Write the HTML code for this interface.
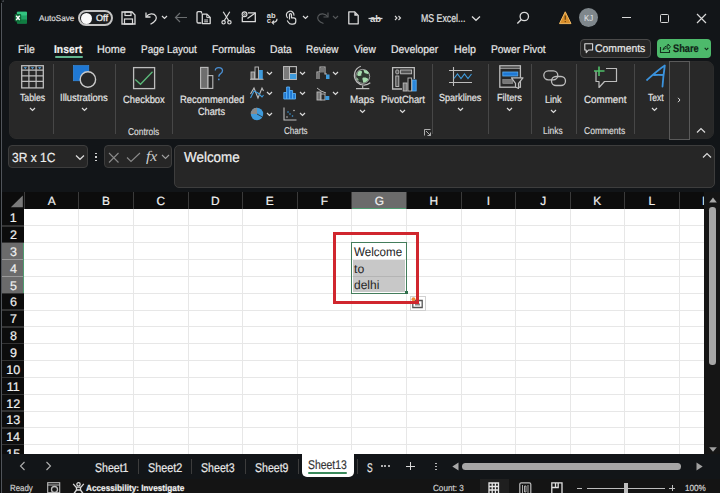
<!DOCTYPE html>
<html><head><meta charset="utf-8"><style>
html,body{margin:0;padding:0;width:720px;height:493px;overflow:hidden;background:#121518;font-family:"Liberation Sans",sans-serif;}
.t{position:absolute;white-space:nowrap;line-height:1;transform-origin:0 0;text-rendering:geometricPrecision;-webkit-text-stroke:0.2px currentColor;}
.r{position:absolute;}
.s{position:absolute;overflow:visible;}
</style></head><body>
<div class="r" style="left:0px;top:0px;width:1px;height:493px;background:#0a0c0d"></div>
<div class="r" style="left:1px;top:2.5px;width:1.2000000000000002px;height:490.5px;background:#50545a"></div>
<div class="r" style="left:2px;top:0px;width:2px;height:1.6px;background:#50545a;border-top-left-radius:2px;opacity:0.7"></div>
<svg class="s" style="left:14px;top:11px" width="14" height="13" viewBox="0 0 14 13"><rect x="2.9" y="0.7" width="10.1" height="11.9" rx="0.8" fill="#21a366"/><rect x="2.9" y="0.7" width="10.1" height="3.8" rx="0.8" fill="#33c481"/><rect x="2.9" y="8.6" width="10.1" height="4" rx="0.8" fill="#107c41"/><rect x="0.7" y="3.1" width="6.5" height="7.5" rx="0.8" fill="#0e6b38"/><path d="M2.2 4.7 L5.7 9 M5.7 4.7 L2.2 9" stroke="#fff" stroke-width="1.4"/></svg>
<div class="t" style="left:38.98px;top:14.00px;font-size:8.4px;color:#dcdcdc;font-weight:normal;transform:scaleX(0.9713);">AutoSave</div>
<div class="r" style="left:78.2px;top:10.3px;width:31px;height:11.3px;border:2px solid #c4c4c4;border-radius:9px;background:#1c1e20"></div>
<div class="r" style="left:81.3px;top:12.5px;width:11.2px;height:11.2px;border-radius:50%;background:#fafafa"></div>
<div class="t" style="left:95.57px;top:14.00px;font-size:9.1px;color:#ececec;font-weight:normal;transform:scaleX(0.9951);-webkit-text-stroke:0.35px currentColor">Off</div>
<svg class="s" style="left:121px;top:11px" width="15" height="14" viewBox="0 0 15 14"><path d="M1 1 H11 L14 4 V13 H1 Z" fill="none" stroke="#dadada" stroke-width="1.3"/><rect x="4" y="1" width="6" height="3.5" fill="none" stroke="#dadada" stroke-width="1.2"/><rect x="3.5" y="8" width="8" height="5" fill="none" stroke="#dadada" stroke-width="1.2"/></svg>
<svg class="s" style="left:144px;top:11px" width="14" height="14" viewBox="0 0 14 14"><path d="M2 1.5 V6 H6.5" fill="none" stroke="#dadada" stroke-width="1.3"/><path d="M2.3 5.8 C4.5 2.2 10 2 11.8 5 C13.4 7.8 11.5 10.5 6.5 13.3" fill="none" stroke="#dadada" stroke-width="1.3"/></svg>
<svg class="s" style="left:161px;top:15px" width="7" height="5" viewBox="0 0 7 5"><path d="M1 1 L3.5 3.5 L6 1" fill="none" stroke="#dadada" stroke-width="1.2"/></svg>
<svg class="s" style="left:174px;top:12px" width="14" height="11" viewBox="0 0 14 11"><path d="M1.5 5.5 H13 M6 1 L1.5 5.5 L6 10" fill="none" stroke="#6b6e70" stroke-width="1.2"/></svg>
<svg class="s" style="left:196px;top:11px" width="16" height="14" viewBox="0 0 16 14"><path d="M5.5 2.5 V1.3 Q5.5 0.7 4.8 0.7 H2.3 Q1 0.7 1 2 V10.8 Q1 12 2.3 12 H5.3" fill="none" stroke="#dadada" stroke-width="1.3"/><path d="M6.3 3.2 H11 L14.2 6.4 V12.6 H6.3 Z" fill="none" stroke="#dadada" stroke-width="1.3" stroke-linejoin="round"/><path d="M10.8 3.2 V6.6 H14.2" fill="none" stroke="#dadada" stroke-width="1"/><path d="M8.2 9 H12 M8.2 10.8 H12" stroke="#dadada" stroke-width="1"/></svg>
<svg class="s" style="left:221px;top:11px" width="11" height="14" viewBox="0 0 11 14"><path d="M2.2 0.8 L7.8 9.8 M8.8 0.8 L3.2 9.8" stroke="#dadada" stroke-width="1.2"/><circle cx="2.6" cy="11.3" r="1.7" fill="none" stroke="#dadada" stroke-width="1.2"/><circle cx="8.4" cy="11.3" r="1.7" fill="none" stroke="#dadada" stroke-width="1.2"/></svg>
<svg class="s" style="left:241px;top:11px" width="16" height="12" viewBox="0 0 16 12"><path d="M1.3 5.5 V10.6 H14.3 V1.8 H7" fill="none" stroke="#dadada" stroke-width="1.3"/><path d="M6.5 7.5 L14.3 2" stroke="#dadada" stroke-width="1.2"/><circle cx="3.5" cy="3.3" r="2.4" fill="none" stroke="#dadada" stroke-width="1.2"/><circle cx="3.5" cy="3.3" r="0.9" fill="none" stroke="#dadada" stroke-width="0.8"/></svg>
<svg class="s" style="left:266px;top:11px" width="13" height="14" viewBox="0 0 13 14"><text x="0.8" y="6.6" font-family="Liberation Sans" font-weight="bold" font-size="7.6" fill="#dadada">ab</text><text x="0.8" y="12.3" font-family="Liberation Sans" font-weight="bold" font-size="7.6" fill="#dadada">c</text><path d="M11 7.8 C11 10.8 9.5 11.5 6.3 11.5 M8 9.6 L6.1 11.5 L8 13.4" fill="none" stroke="#dadada" stroke-width="1.2"/></svg>
<svg class="s" style="left:285px;top:10px" width="12" height="15" viewBox="0 0 12 15"><path d="M2.6 8.2 C0.6 6 1 2 4.3 1.3 C7 0.8 9.3 2.8 8.9 5.6" fill="none" stroke="#dadada" stroke-width="1.2"/><path d="M4.5 9.5 V4.6 Q4.5 3.6 5.5 3.6 Q6.5 3.6 6.5 4.6 V7.8 H8.8 Q10.8 7.8 10.8 10 V11.3 Q10.8 14.2 7.8 14.2 H6.6 Q4.6 14.2 3.5 12.5 L2.2 10.5" fill="none" stroke="#dadada" stroke-width="1.2" stroke-linejoin="round"/></svg>
<svg class="s" style="left:302px;top:15px" width="7" height="5" viewBox="0 0 7 5"><path d="M1 1 L3.5 3.5 L6 1" fill="none" stroke="#dadada" stroke-width="1.2"/></svg>
<svg class="s" style="left:317px;top:11px" width="13" height="13" viewBox="0 0 13 13"><path d="M11 1.5 V6 H6.5" fill="none" stroke="#55585a" stroke-width="1.2"/><path d="M10.7 5.8 C8.5 2.2 3 2 1.2 5 C-0.4 7.8 1.5 10.5 6.5 12.5" fill="none" stroke="#55585a" stroke-width="1.2"/></svg>
<svg class="s" style="left:332px;top:15px" width="7" height="5" viewBox="0 0 7 5"><path d="M1 1 L3.5 3.5 L6 1" fill="none" stroke="#55585a" stroke-width="1.1"/></svg>
<svg class="s" style="left:347.5px;top:11px" width="11" height="14" viewBox="0 0 11 14"><path d="M0.8 0.8 H6.5 L10.2 4.5 V12.8 H0.8 Z" fill="none" stroke="#dadada" stroke-width="1.3" stroke-linejoin="round"/><path d="M6.3 1.2 V4.7 H9.8 Z" fill="#dadada"/></svg>
<svg class="s" style="left:368px;top:12px" width="15" height="11" viewBox="0 0 15 11"><text x="2" y="9.6" font-family="Liberation Sans" font-weight="bold" font-size="9.5" fill="#dadada">ab</text><path d="M0.5 6.5 H14.5" stroke="#dadada" stroke-width="1.3"/></svg>
<svg class="s" style="left:394px;top:15px" width="8" height="6" viewBox="0 0 8 6"><path d="M1 1 L3 3 L1 5 M4.5 1 L6.5 3 L4.5 5" fill="none" stroke="#dadada" stroke-width="1.1"/></svg>
<div class="t" style="left:420.88px;top:14.00px;font-size:11.3px;color:#e4e4e4;font-weight:normal;transform:scaleX(0.7758);">MS Excel...</div>
<svg class="s" style="left:471px;top:15px" width="10" height="7" viewBox="0 0 10 7"><path d="M1 1.5 L5 5.3 L9 1.5" fill="none" stroke="#dadada" stroke-width="1.3"/></svg>
<svg class="s" style="left:516px;top:11px" width="14" height="14" viewBox="0 0 14 14"><circle cx="8.3" cy="5.5" r="4.2" fill="none" stroke="#dadada" stroke-width="1.3"/><path d="M5.3 8.5 L1.3 12.5" stroke="#dadada" stroke-width="1.4"/></svg>
<svg class="s" style="left:558.5px;top:11px" width="12.5" height="13.5" viewBox="0 0 12.5 13.5"><path d="M6.25 0.8 L12 12.6 H0.5 Z" fill="#d98e2a" stroke="#f0b860" stroke-width="1" stroke-linejoin="round"/><path d="M6.25 4.5 V8.8" stroke="#5a3a10" stroke-width="1.2"/><circle cx="6.25" cy="10.6" r="0.7" fill="#5a3a10"/></svg>
<div class="r" style="left:578.8px;top:8.2px;width:19.1px;height:19.1px;border-radius:50%;background:#7f878c"></div>
<div class="t" style="left:583.96px;top:14.00px;font-size:8.6px;color:#e0e4e6;font-weight:normal;transform:scaleX(0.9077);-webkit-text-stroke:0">KJ</div>
<div class="r" style="left:621.5px;top:17px;width:9.5px;height:1px;background:#d8d8d8"></div>
<div class="r" style="left:659.5px;top:13.5px;width:7.2px;height:7.2px;border:1.1px solid #d8d8d8;border-radius:1.5px"></div>
<svg class="s" style="left:696px;top:13px" width="11" height="11" viewBox="0 0 11 11"><path d="M1 1 L10 10 M10 1 L1 10" stroke="#d8d8d8" stroke-width="1.2"/></svg>
<div class="t" style="left:18.14px;top:45.00px;font-size:11.3px;color:#e8e8e8;font-weight:normal;transform:scaleX(0.9231);">File</div>
<div class="t" style="left:54.02px;top:45.00px;font-size:11.3px;color:#f2f2f2;font-weight:bold;transform:scaleX(0.9137);">Insert</div>
<div class="r" style="left:55px;top:56px;width:27.5px;height:2.299999999999997px;background:#62b58f;border-radius:1px"></div>
<div class="t" style="left:96.61px;top:45.00px;font-size:11.3px;color:#e8e8e8;font-weight:normal;transform:scaleX(0.9574);">Home</div>
<div class="t" style="left:140.88px;top:45.00px;font-size:11.3px;color:#e8e8e8;font-weight:normal;transform:scaleX(0.8808);">Page Layout</div>
<div class="t" style="left:212.45px;top:45.00px;font-size:11.3px;color:#e8e8e8;font-weight:normal;transform:scaleX(0.9177);">Formulas</div>
<div class="t" style="left:269.96px;top:45.00px;font-size:11.3px;color:#e8e8e8;font-weight:normal;transform:scaleX(0.9111);">Data</div>
<div class="t" style="left:305.89px;top:45.00px;font-size:11.3px;color:#e8e8e8;font-weight:normal;transform:scaleX(0.8744);">Review</div>
<div class="t" style="left:353.96px;top:45.00px;font-size:11.3px;color:#e8e8e8;font-weight:normal;transform:scaleX(0.8981);">View</div>
<div class="t" style="left:390.85px;top:45.00px;font-size:11.3px;color:#e8e8e8;font-weight:normal;transform:scaleX(0.9187);">Developer</div>
<div class="t" style="left:453.83px;top:45.00px;font-size:11.3px;color:#e8e8e8;font-weight:normal;transform:scaleX(0.9436);">Help</div>
<div class="t" style="left:490.86px;top:45.00px;font-size:11.3px;color:#e8e8e8;font-weight:normal;transform:scaleX(0.9076);">Power Pivot</div>
<div class="r" style="left:580px;top:38.6px;width:68.5px;height:17px;border:1px solid #4a4a4a;border-radius:4px;background:#262626"></div>
<svg class="s" style="left:583.5px;top:43px" width="10" height="11" viewBox="0 0 10 11"><path d="M0.8 0.8 H8.6 V7 H4.5 L2.2 9.6 V7 H0.8 Z" fill="none" stroke="#dadada" stroke-width="1.1" stroke-linejoin="round"/></svg>
<div class="t" style="left:595.48px;top:44.00px;font-size:11.0px;color:#e8e8e8;font-weight:normal;transform:scaleX(0.9459);">Comments</div>
<div class="r" style="left:656.5px;top:39px;width:54.7px;height:18.8px;border-radius:4px;background:#4dba6b"></div>
<svg class="s" style="left:659px;top:42px" width="12" height="12" viewBox="0 0 12 12"><path d="M1.5 5 V10.5 H10.5 V8" fill="none" stroke="#13301d" stroke-width="1.1"/><path d="M4 8 C4.5 5 6.5 4 9 4 V2 L11.5 4.8 L9 7.5 V5.8 C7 5.8 5.5 6.5 4 8 Z" fill="none" stroke="#13301d" stroke-width="1"/></svg>
<div class="t" style="left:672.52px;top:44.00px;font-size:10.9px;color:#0f2416;font-weight:bold;transform:scaleX(0.8512);">Share</div>
<svg class="s" style="left:703.5px;top:47px" width="5" height="4" viewBox="0 0 5 4"><path d="M0.7 0.8 L2.5 2.8 L4.3 0.8" fill="none" stroke="#0f2416" stroke-width="1.1"/></svg>
<div class="r" style="left:8.5px;top:60.5px;width:703px;height:76px;border:1px solid #2b2b2b;border-radius:7px;background:#282828"></div>
<div class="r" style="left:53.3px;top:64px;width:1.0px;height:70px;background:#474747"></div>
<div class="r" style="left:115.0px;top:64px;width:1.0px;height:70px;background:#474747"></div>
<div class="r" style="left:171.7px;top:64px;width:1.0px;height:70px;background:#474747"></div>
<div class="r" style="left:432.0px;top:64px;width:1.0px;height:70px;background:#474747"></div>
<div class="r" style="left:487.8px;top:64px;width:1.0px;height:70px;background:#474747"></div>
<div class="r" style="left:531.3px;top:64px;width:1.0px;height:70px;background:#474747"></div>
<div class="r" style="left:576.3px;top:64px;width:1.0px;height:70px;background:#474747"></div>
<div class="r" style="left:633.8px;top:64px;width:1.0px;height:70px;background:#474747"></div>
<div class="r" style="left:669px;top:60.6px;width:18.8px;height:77.5px;border:1px solid #5a5a5a;background:#2a2a2a"></div>
<svg class="s" style="left:677px;top:96.5px" width="4" height="6" viewBox="0 0 4 6"><path d="M1 0.8 L3 3 L1 5.2" fill="none" stroke="#dadada" stroke-width="1"/></svg>
<svg class="s" style="left:696px;top:127px" width="10" height="7" viewBox="0 0 10 7"><path d="M1 5.5 L5 1.5 L9 5.5" fill="none" stroke="#dadada" stroke-width="1.2"/></svg>
<svg class="s" style="left:21px;top:65px" width="23" height="24" viewBox="0 0 23 24"><rect x="0.7" y="0.7" width="21.6" height="22.2" fill="none" stroke="#bdbdbd" stroke-width="1.3"/><path d="M0.7 5.2 H22.3 M0.7 10.8 H22.3 M0.7 16.4 H22.3 M7.9 0.7 V22.9 M15.1 0.7 V22.9" stroke="#bdbdbd" stroke-width="1.2"/><path d="M2.6 2.3 L4.3 4.1 L6 2.3 Z M9.8 2.3 L11.5 4.1 L13.2 2.3 Z M17 2.3 L18.7 4.1 L20.4 2.3 Z" fill="#5aaef0"/></svg>
<div class="t" style="left:20.11px;top:94.00px;font-size:10.25px;color:#e4e4e4;font-weight:normal;transform:scaleX(0.8509);">Tables</div>
<svg class="s" style="left:28.700000000000003px;top:106.5px" width="7" height="5" viewBox="0 0 7 5"><path d="M1 1 L3.5 3.5 L6 1" fill="none" stroke="#dadada" stroke-width="1.2"/></svg>
<svg class="s" style="left:73px;top:65px" width="25" height="24" viewBox="0 0 25 24"><rect x="0.3" y="0.5" width="15.5" height="15.3" fill="#1f78d4" stroke="#3a8ee0" stroke-width="0.6"/><circle cx="14.9" cy="14.5" r="7.7" fill="#282828" stroke="#cacaca" stroke-width="1.4"/></svg>
<div class="t" style="left:60.13px;top:94.00px;font-size:10.25px;color:#e4e4e4;font-weight:normal;transform:scaleX(0.9222);">Illustrations</div>
<svg class="s" style="left:80.7px;top:106.5px" width="7" height="5" viewBox="0 0 7 5"><path d="M1 1 L3.5 3.5 L6 1" fill="none" stroke="#dadada" stroke-width="1.2"/></svg>
<svg class="s" style="left:133px;top:67px" width="23" height="23" viewBox="0 0 23 23"><rect x="0.6" y="0.6" width="21" height="21" fill="none" stroke="#bdbdbd" stroke-width="1.3"/><path d="M2.3 12.6 L7.5 17.3 L19.5 4.8" fill="none" stroke="#5cb97a" stroke-width="1.3"/></svg>
<div class="t" style="left:122.73px;top:95.00px;font-size:10.5px;color:#e4e4e4;font-weight:normal;transform:scaleX(0.8950);">Checkbox</div>
<div class="t" style="left:127.58px;top:128.00px;font-size:9.9px;color:#d8d8d8;font-weight:normal;transform:scaleX(0.8496);">Controls</div>
<svg class="s" style="left:199px;top:66px" width="26" height="24" viewBox="0 0 26 24"><rect x="1.6" y="1.4" width="7.4" height="21" fill="#6e6e6e" stroke="#bdbdbd" stroke-width="1.1"/><rect x="9" y="9.6" width="4.8" height="12.8" fill="#282828" stroke="#bdbdbd" stroke-width="1.1"/><path d="M16.3 4.6 C16.3 2.6 17.8 1.6 19.8 1.6 C21.9 1.6 23.5 2.9 23.5 4.8 C23.5 6.6 22.3 7.3 21.1 8.1 C20.1 8.8 19.8 9.4 19.8 10.8" fill="none" stroke="#4a8fd3" stroke-width="1.3"/><circle cx="19.8" cy="13.4" r="0.85" fill="#4a8fd3"/></svg>
<div class="t" style="left:179.62px;top:95.00px;font-size:10.5px;color:#e4e4e4;font-weight:normal;transform:scaleX(0.9013);">Recommended</div>
<div class="t" style="left:198.04px;top:107.00px;font-size:10.5px;color:#e4e4e4;font-weight:normal;transform:scaleX(0.8725);">Charts</div>
<svg class="s" style="left:249.5px;top:66px" width="14" height="14" viewBox="0 0 14 14"><rect x="1" y="6" width="3.5" height="7" fill="#777" stroke="#bdbdbd" stroke-width="0.9"/><rect x="5" y="1" width="3.5" height="12" fill="#2a2a2a" stroke="#bdbdbd" stroke-width="0.9"/><rect x="9" y="4" width="3.8" height="9" fill="#3f9bdc"/><path d="M0 13.3 H13.5" stroke="#bdbdbd" stroke-width="1"/></svg>
<svg class="s" style="left:265.5px;top:70.5px" width="7" height="5" viewBox="0 0 7 5"><path d="M1 1 L3.5 3.5 L6 1" fill="none" stroke="#dadada" stroke-width="1.2"/></svg>
<svg class="s" style="left:283px;top:66px" width="14" height="14" viewBox="0 0 14 14"><rect x="0.6" y="0.6" width="12.8" height="12.8" fill="none" stroke="#bdbdbd" stroke-width="1.1"/><rect x="1" y="1" width="5" height="12" fill="#7a7a7a"/><rect x="7" y="8" width="6.3" height="5" fill="#3f9bdc"/><path d="M6.5 0.6 V13.4 M6.5 7.5 H13.4" stroke="#bdbdbd" stroke-width="1"/></svg>
<svg class="s" style="left:299.2px;top:70.5px" width="7" height="5" viewBox="0 0 7 5"><path d="M1 1 L3.5 3.5 L6 1" fill="none" stroke="#dadada" stroke-width="1.2"/></svg>
<svg class="s" style="left:316px;top:66px" width="14" height="14" viewBox="0 0 14 14"><path d="M1 13 V6 H4 V1 H9 V8 H11" fill="none" stroke="#bdbdbd" stroke-width="1.1"/><rect x="1.5" y="6.5" width="2.5" height="6.5" fill="#777"/><rect x="4.5" y="1.5" width="4" height="5" fill="#777"/><rect x="10" y="8.5" width="3.5" height="4.5" fill="#3f9bdc"/></svg>
<svg class="s" style="left:331.5px;top:70.5px" width="7" height="5" viewBox="0 0 7 5"><path d="M1 1 L3.5 3.5 L6 1" fill="none" stroke="#dadada" stroke-width="1.2"/></svg>
<svg class="s" style="left:249.5px;top:86px" width="14" height="14" viewBox="0 0 14 14"><path d="M0.5 8 L4 2 L8 12 L12 2 L13.5 5" fill="none" stroke="#bdbdbd" stroke-width="1.1"/><path d="M0.5 12 L4 5 L8 7 L12 11 L13.5 9" fill="none" stroke="#3f9bdc" stroke-width="1.1"/></svg>
<svg class="s" style="left:265.5px;top:90.5px" width="7" height="5" viewBox="0 0 7 5"><path d="M1 1 L3.5 3.5 L6 1" fill="none" stroke="#dadada" stroke-width="1.2"/></svg>
<svg class="s" style="left:283px;top:86px" width="14" height="14" viewBox="0 0 14 14"><path d="M0.8 13 V6.5 H3.6 V13 M3.6 13 V1 H6.6 V13 M6.6 13 V4.5 H9.6 V13 M9.6 13 V7.5 H12.5 V13 H0.8" fill="#1f78d4" stroke="#5aaef0" stroke-width="0.9"/></svg>
<svg class="s" style="left:299.2px;top:90.5px" width="7" height="5" viewBox="0 0 7 5"><path d="M1 1 L3.5 3.5 L6 1" fill="none" stroke="#dadada" stroke-width="1.2"/></svg>
<svg class="s" style="left:316px;top:86px" width="14" height="15" viewBox="0 0 14 15"><path d="M1 2 L5 5 L10 7" fill="none" stroke="#bdbdbd" stroke-width="1"/><rect x="1" y="6" width="4" height="8" fill="#777" stroke="#bdbdbd" stroke-width="0.9"/><rect x="5" y="8" width="4" height="6" fill="#2a2a2a" stroke="#bdbdbd" stroke-width="0.9"/><rect x="9.3" y="10" width="4" height="4" fill="#3f9bdc"/></svg>
<svg class="s" style="left:331.5px;top:90.5px" width="7" height="5" viewBox="0 0 7 5"><path d="M1 1 L3.5 3.5 L6 1" fill="none" stroke="#dadada" stroke-width="1.2"/></svg>
<svg class="s" style="left:249.5px;top:107px" width="14" height="14" viewBox="0 0 14 14"><circle cx="7" cy="7" r="6.2" fill="#3f9bdc"/><path d="M7 7 V0.8 A6.2 6.2 0 0 0 0.8 7 Z" fill="#8a8a8a"/><path d="M7 7 L12.5 10" stroke="#2a2a2a" stroke-width="0.8"/></svg>
<svg class="s" style="left:265.5px;top:111.5px" width="7" height="5" viewBox="0 0 7 5"><path d="M1 1 L3.5 3.5 L6 1" fill="none" stroke="#dadada" stroke-width="1.2"/></svg>
<svg class="s" style="left:283px;top:107px" width="14" height="14" viewBox="0 0 14 14"><path d="M1 0.5 V13 H13.5" fill="none" stroke="#bdbdbd" stroke-width="1.1"/><circle cx="4" cy="10" r="0.8" fill="#bdbdbd"/><circle cx="7" cy="7" r="0.8" fill="#3f9bdc"/><circle cx="9.5" cy="9" r="0.8" fill="#3f9bdc"/><circle cx="11" cy="3.5" r="0.8" fill="#bdbdbd"/><circle cx="5" cy="5" r="0.8" fill="#3f9bdc"/></svg>
<svg class="s" style="left:299.2px;top:111.5px" width="7" height="5" viewBox="0 0 7 5"><path d="M1 1 L3.5 3.5 L6 1" fill="none" stroke="#dadada" stroke-width="1.2"/></svg>
<div class="t" style="left:283.60px;top:127.00px;font-size:9.9px;color:#d8d8d8;font-weight:normal;transform:scaleX(0.8123);">Charts</div>
<svg class="s" style="left:423.5px;top:128.5px" width="7" height="7" viewBox="0 0 7 7"><path d="M0.5 6.5 V0.5 H6.5 M2 2 L6.5 6.5 M3.5 6.5 H6.5 V3.5" fill="none" stroke="#bdbdbd" stroke-width="0.9"/></svg>
<svg class="s" style="left:352px;top:65px" width="21" height="25" viewBox="0 0 21 25"><circle cx="10.7" cy="11.4" r="7" fill="#2f3a31" stroke="#bdbdbd" stroke-width="0.8"/><path d="M5.5 8 C6.5 5.5 9 5 10 6.5 C10.5 8 8.5 9 9.5 10.5 C8 11 6 11.5 5.2 10 Z M11.5 5.2 C13.5 4.8 16 6 17 8.5 C15.5 9.5 14 8.5 12.5 8 Z M10.5 13 C12.5 12 15 13 16.5 14 C15.5 16.5 13 18 11 17.5 C11.5 16 10 14.5 10.5 13 Z M4.3 12.5 C5.5 13 6.5 14 6.8 15.5 C5.5 15 4.5 14 4.3 12.5 Z" fill="#a6dcae"/><path d="M8.8 1.3 C2 3.8 0.5 12 5 17 C8.5 20.8 14.5 21 18.3 17.8" fill="none" stroke="#bdbdbd" stroke-width="1.2"/><path d="M10.7 20.5 V23.3 M4 23.6 H17.3" stroke="#bdbdbd" stroke-width="1.2"/></svg>
<div class="t" style="left:350.19px;top:95.00px;font-size:10.5px;color:#e4e4e4;font-weight:normal;transform:scaleX(0.9409);">Maps</div>
<svg class="s" style="left:359.0px;top:108.5px" width="7" height="5" viewBox="0 0 7 5"><path d="M1 1 L3.5 3.5 L6 1" fill="none" stroke="#dadada" stroke-width="1.2"/></svg>
<svg class="s" style="left:391px;top:66px" width="27" height="26" viewBox="0 0 27 26"><path d="M11 23 H1.6 V1.6 H23.3 V13" fill="none" stroke="#bdbdbd" stroke-width="1.3"/><rect x="4.8" y="4" width="3" height="3.8" rx="0.8" fill="#555" stroke="#bdbdbd" stroke-width="0.9"/><rect x="9.6" y="4" width="11" height="3.8" fill="#555" stroke="#bdbdbd" stroke-width="0.9"/><rect x="4.8" y="10" width="3" height="10.5" fill="#555" stroke="#bdbdbd" stroke-width="0.9"/><rect x="12.2" y="17" width="3.8" height="8" fill="#777" stroke="#bdbdbd" stroke-width="0.9"/><rect x="17" y="12" width="3.6" height="13" fill="#151515" stroke="#bdbdbd" stroke-width="0.9"/><rect x="21.4" y="14" width="3.8" height="11" fill="#2a86dc" stroke="#5aaef0" stroke-width="0.8"/></svg>
<div class="t" style="left:381.23px;top:95.00px;font-size:10.5px;color:#e4e4e4;font-weight:normal;transform:scaleX(0.8945);">PivotChart</div>
<svg class="s" style="left:399.2px;top:109.0px" width="7" height="5" viewBox="0 0 7 5"><path d="M1 1 L3.5 3.5 L6 1" fill="none" stroke="#dadada" stroke-width="1.2"/></svg>
<svg class="s" style="left:449px;top:67px" width="24" height="20" viewBox="0 0 24 20"><path d="M4.5 0 V19 M0 3.5 H23 M0 15.5 H23" stroke="#bdbdbd" stroke-width="1.1"/><path d="M5 11.5 L8.5 7 L12 11.5 L15.5 7 L19 11.5 L22.5 7" fill="none" stroke="#3f9bdc" stroke-width="1.1"/></svg>
<div class="t" style="left:439.28px;top:94.00px;font-size:10.25px;color:#e4e4e4;font-weight:normal;transform:scaleX(0.8829);">Sparklines</div>
<svg class="s" style="left:457.0px;top:106.5px" width="7" height="5" viewBox="0 0 7 5"><path d="M1 1 L3.5 3.5 L6 1" fill="none" stroke="#dadada" stroke-width="1.2"/></svg>
<svg class="s" style="left:498.5px;top:65px" width="25" height="25" viewBox="0 0 25 25"><rect x="0.8" y="0.8" width="20.6" height="21.4" fill="none" stroke="#bdbdbd" stroke-width="1.3"/><path d="M0.8 3.2 H21.4" stroke="#bdbdbd" stroke-width="1"/><rect x="3.8" y="7" width="15" height="4" fill="#1f78d4" stroke="#5aaef0" stroke-width="0.8"/><rect x="3.8" y="14.5" width="10" height="4" fill="#777" stroke="#999" stroke-width="0.6"/><path d="M12.5 12.8 H24 L19.5 18.3 V23.5 L16.5 22 V18.3 Z" fill="#282828" stroke="#bdbdbd" stroke-width="1.2" stroke-linejoin="round"/></svg>
<div class="t" style="left:497.25px;top:94.00px;font-size:10.25px;color:#e4e4e4;font-weight:normal;transform:scaleX(0.8917);">Filters</div>
<svg class="s" style="left:506.0px;top:106.5px" width="7" height="5" viewBox="0 0 7 5"><path d="M1 1 L3.5 3.5 L6 1" fill="none" stroke="#dadada" stroke-width="1.2"/></svg>
<svg class="s" style="left:542.5px;top:70px" width="24" height="17" viewBox="0 0 24 17"><rect x="0.8" y="0.8" width="14" height="9" rx="4.5" fill="none" stroke="#bdbdbd" stroke-width="1.3"/><rect x="8.5" y="6.5" width="14" height="9" rx="4.5" fill="none" stroke="#bdbdbd" stroke-width="1.3"/></svg>
<div class="t" style="left:545.16px;top:95.00px;font-size:10.5px;color:#e4e4e4;font-weight:normal;transform:scaleX(0.8643);">Link</div>
<svg class="s" style="left:549.8px;top:108.5px" width="7" height="5" viewBox="0 0 7 5"><path d="M1 1 L3.5 3.5 L6 1" fill="none" stroke="#dadada" stroke-width="1.2"/></svg>
<div class="t" style="left:543.31px;top:127.00px;font-size:9.9px;color:#d8d8d8;font-weight:normal;transform:scaleX(0.8524);">Links</div>
<svg class="s" style="left:592px;top:66px" width="26" height="23" viewBox="0 0 26 23"><path d="M4 5 V15.5 H7 V21.5 L12.5 15.5 H24.5 V2.5 H14" fill="none" stroke="#bdbdbd" stroke-width="1.2" stroke-linejoin="round"/><path d="M7 0.5 V10 M2 5 H12.5" stroke="#4fbf68" stroke-width="1.6"/></svg>
<div class="t" style="left:583.91px;top:95.00px;font-size:10.5px;color:#e4e4e4;font-weight:normal;transform:scaleX(0.9310);">Comment</div>
<div class="t" style="left:584.27px;top:127.00px;font-size:9.9px;color:#d8d8d8;font-weight:normal;transform:scaleX(0.8637);">Comments</div>
<svg class="s" style="left:645px;top:64px" width="22" height="24" viewBox="0 0 22 24"><path d="M2 16 C6.5 12 13 6 19.8 1.5 C18.8 8.5 18 15.5 17.5 22.5 M9 11 C12 10.8 15 10.8 18.6 11" fill="none" stroke="#3b93dd" stroke-width="1.8" stroke-linecap="round" stroke-linejoin="round"/></svg>
<div class="t" style="left:647.81px;top:94.00px;font-size:10.25px;color:#e4e4e4;font-weight:normal;transform:scaleX(0.8328);">Text</div>
<svg class="s" style="left:651.2px;top:106.5px" width="7" height="5" viewBox="0 0 7 5"><path d="M1 1 L3.5 3.5 L6 1" fill="none" stroke="#dadada" stroke-width="1.2"/></svg>
<div class="r" style="left:8px;top:145.2px;width:78px;height:20.5px;border:1px solid #3d3d3d;border-radius:4px;background:#262626"></div>
<div class="t" style="left:12.04px;top:151.00px;font-size:13.2px;color:#eeeeee;font-weight:normal;transform:scaleX(0.9105);">3R x 1C</div>
<svg class="s" style="left:75px;top:154px" width="10" height="7" viewBox="0 0 10 7"><path d="M1 1.5 L5 5.3 L9 1.5" fill="none" stroke="#dadada" stroke-width="1.2"/></svg>
<div class="r" style="left:95px;top:152.7px;width:1.5999999999999943px;height:1.6000000000000227px;background:#cfcfcf"></div>
<div class="r" style="left:95px;top:156.2px;width:1.5999999999999943px;height:1.6000000000000227px;background:#cfcfcf"></div>
<div class="r" style="left:95px;top:159.7px;width:1.5999999999999943px;height:1.6000000000000227px;background:#cfcfcf"></div>
<div class="r" style="left:104px;top:145.3px;width:65.7px;height:20.3px;border:1px solid #3d3d3d;border-radius:4px;background:#262626"></div>
<svg class="s" style="left:108px;top:152px" width="12" height="11" viewBox="0 0 12 11"><path d="M1 1 L10.5 10.5 M10.5 1 L1 10.5" stroke="#8a8a8a" stroke-width="1.1"/></svg>
<svg class="s" style="left:125.5px;top:152px" width="15" height="11" viewBox="0 0 15 11"><path d="M1 5.5 L5 9.5 L14 1" fill="none" stroke="#8a8a8a" stroke-width="1.1"/></svg>
<div class="t" style="left:145.5px;top:149.5px;font-size:14.5px;color:#cfcfcf;font-family:'Liberation Serif',serif;font-style:italic;transform:scaleX(1.08);-webkit-text-stroke:0">fx</div>
<svg class="s" style="left:161px;top:154px" width="9" height="6" viewBox="0 0 9 6"><path d="M1 1 L4.5 4.5 L8 1" fill="none" stroke="#a0a0a0" stroke-width="1.1"/></svg>
<div class="r" style="left:174px;top:145px;width:539px;height:40.6px;border:1px solid #3d3d3d;border-radius:5px;background:#262626"></div>
<div class="t" style="left:183.85px;top:151.00px;font-size:14.5px;color:#f0f0f0;font-weight:normal;transform:scaleX(0.9264);">Welcome</div>
<svg class="s" style="left:702px;top:152px" width="10" height="7" viewBox="0 0 10 7"><path d="M1 5.5 L5 1.5 L9 5.5" fill="none" stroke="#dadada" stroke-width="1.2"/></svg>
<div class="r" style="left:2px;top:192px;width:702px;height:17.0px;background:#0c0c0c"></div>
<div class="r" style="left:2px;top:209.0px;width:22.3px;height:245.0px;background:#0c0c0c"></div>
<div class="r" style="left:24.3px;top:209.0px;width:679.7px;height:245.0px;background:#ffffff"></div>
<div class="r" style="left:23.5px;top:192px;width:0.8000000000000007px;height:17.0px;background:#3a3a3a"></div>
<svg class="s" style="left:9px;top:194px" width="15" height="14" viewBox="0 0 15 14"><path d="M13.8 1.5 V13.2 H1.8 Z" fill="#7a7a7a"/></svg>
<div class="r" style="left:78.40px;top:209.0px;width:1px;height:245.00px;background:#e7e7e7"></div><div class="r" style="left:78.40px;top:192px;width:1px;height:17.00px;background:#3a3a3a"></div><div class="r" style="left:133.00px;top:209.0px;width:1px;height:245.00px;background:#e7e7e7"></div><div class="r" style="left:133.00px;top:192px;width:1px;height:17.00px;background:#3a3a3a"></div><div class="r" style="left:187.60px;top:209.0px;width:1px;height:245.00px;background:#e7e7e7"></div><div class="r" style="left:187.60px;top:192px;width:1px;height:17.00px;background:#3a3a3a"></div><div class="r" style="left:242.20px;top:209.0px;width:1px;height:245.00px;background:#e7e7e7"></div><div class="r" style="left:242.20px;top:192px;width:1px;height:17.00px;background:#3a3a3a"></div><div class="r" style="left:296.80px;top:209.0px;width:1px;height:245.00px;background:#e7e7e7"></div><div class="r" style="left:296.80px;top:192px;width:1px;height:17.00px;background:#3a3a3a"></div><div class="r" style="left:351.40px;top:209.0px;width:1px;height:245.00px;background:#e7e7e7"></div><div class="r" style="left:351.40px;top:192px;width:1px;height:17.00px;background:#3a3a3a"></div><div class="r" style="left:406.00px;top:209.0px;width:1px;height:245.00px;background:#e7e7e7"></div><div class="r" style="left:406.00px;top:192px;width:1px;height:17.00px;background:#3a3a3a"></div><div class="r" style="left:460.60px;top:209.0px;width:1px;height:245.00px;background:#e7e7e7"></div><div class="r" style="left:460.60px;top:192px;width:1px;height:17.00px;background:#3a3a3a"></div><div class="r" style="left:515.20px;top:209.0px;width:1px;height:245.00px;background:#e7e7e7"></div><div class="r" style="left:515.20px;top:192px;width:1px;height:17.00px;background:#3a3a3a"></div><div class="r" style="left:569.80px;top:209.0px;width:1px;height:245.00px;background:#e7e7e7"></div><div class="r" style="left:569.80px;top:192px;width:1px;height:17.00px;background:#3a3a3a"></div><div class="r" style="left:624.40px;top:209.0px;width:1px;height:245.00px;background:#e7e7e7"></div><div class="r" style="left:624.40px;top:192px;width:1px;height:17.00px;background:#3a3a3a"></div><div class="r" style="left:679.00px;top:209.0px;width:1px;height:245.00px;background:#e7e7e7"></div><div class="r" style="left:679.00px;top:192px;width:1px;height:17.00px;background:#3a3a3a"></div><div class="r" style="left:24.3px;top:225.34px;width:679.70px;height:1px;background:#e7e7e7"></div><div class="r" style="left:2px;top:225.14px;width:22.30px;height:1.4px;background:#333"></div><div class="r" style="left:24.3px;top:242.18px;width:679.70px;height:1px;background:#e7e7e7"></div><div class="r" style="left:2px;top:241.98px;width:22.30px;height:1.4px;background:#333"></div><div class="r" style="left:24.3px;top:259.02px;width:679.70px;height:1px;background:#e7e7e7"></div><div class="r" style="left:2px;top:258.82px;width:22.30px;height:1.4px;background:#333"></div><div class="r" style="left:24.3px;top:275.86px;width:679.70px;height:1px;background:#e7e7e7"></div><div class="r" style="left:2px;top:275.66px;width:22.30px;height:1.4px;background:#333"></div><div class="r" style="left:24.3px;top:292.70px;width:679.70px;height:1px;background:#e7e7e7"></div><div class="r" style="left:2px;top:292.50px;width:22.30px;height:1.4px;background:#333"></div><div class="r" style="left:24.3px;top:309.54px;width:679.70px;height:1px;background:#e7e7e7"></div><div class="r" style="left:2px;top:309.34px;width:22.30px;height:1.4px;background:#333"></div><div class="r" style="left:24.3px;top:326.38px;width:679.70px;height:1px;background:#e7e7e7"></div><div class="r" style="left:2px;top:326.18px;width:22.30px;height:1.4px;background:#333"></div><div class="r" style="left:24.3px;top:343.22px;width:679.70px;height:1px;background:#e7e7e7"></div><div class="r" style="left:2px;top:343.02px;width:22.30px;height:1.4px;background:#333"></div><div class="r" style="left:24.3px;top:360.06px;width:679.70px;height:1px;background:#e7e7e7"></div><div class="r" style="left:2px;top:359.86px;width:22.30px;height:1.4px;background:#333"></div><div class="r" style="left:24.3px;top:376.90px;width:679.70px;height:1px;background:#e7e7e7"></div><div class="r" style="left:2px;top:376.70px;width:22.30px;height:1.4px;background:#333"></div><div class="r" style="left:24.3px;top:393.74px;width:679.70px;height:1px;background:#e7e7e7"></div><div class="r" style="left:2px;top:393.54px;width:22.30px;height:1.4px;background:#333"></div><div class="r" style="left:24.3px;top:410.58px;width:679.70px;height:1px;background:#e7e7e7"></div><div class="r" style="left:2px;top:410.38px;width:22.30px;height:1.4px;background:#333"></div><div class="r" style="left:24.3px;top:427.42px;width:679.70px;height:1px;background:#e7e7e7"></div><div class="r" style="left:2px;top:427.22px;width:22.30px;height:1.4px;background:#333"></div><div class="r" style="left:24.3px;top:444.26px;width:679.70px;height:1px;background:#e7e7e7"></div><div class="r" style="left:2px;top:444.06px;width:22.30px;height:1.4px;background:#333"></div>
<div class="r" style="left:351.90000000000003px;top:192px;width:54.599999999999966px;height:17.0px;background:#6b6b6b;border-bottom:1.3px solid #4f9a70;box-sizing:border-box"></div>
<div class="r" style="left:2px;top:242.68px;width:22.3px;height:50.51999999999998px;background:#6b6b6b;border-right:1.3px solid #4f9a70;box-sizing:border-box"></div>
<div class="r" style="left:2px;top:259.02px;width:21.0px;height:1.0px;background:#9a9a9a"></div>
<div class="r" style="left:2px;top:275.86px;width:21.0px;height:1.0px;background:#9a9a9a"></div>
<div class="t" style="left:47.64px;top:196.00px;font-size:11.9px;color:#f0f0f0;font-weight:normal;transform:scaleX(1.0000);">A</div>
<div class="t" style="left:102.06px;top:196.00px;font-size:11.9px;color:#f0f0f0;font-weight:normal;transform:scaleX(1.0000);">B</div>
<div class="t" style="left:156.43px;top:196.00px;font-size:11.9px;color:#f0f0f0;font-weight:normal;transform:scaleX(1.0000);">C</div>
<div class="t" style="left:210.90px;top:196.00px;font-size:11.9px;color:#f0f0f0;font-weight:normal;transform:scaleX(1.0000);">D</div>
<div class="t" style="left:265.80px;top:196.00px;font-size:11.9px;color:#f0f0f0;font-weight:normal;transform:scaleX(1.0000);">E</div>
<div class="t" style="left:320.72px;top:196.00px;font-size:11.9px;color:#f0f0f0;font-weight:normal;transform:scaleX(1.0000);">F</div>
<div class="t" style="left:374.71px;top:196.00px;font-size:11.9px;color:#f0f0f0;font-weight:normal;transform:scaleX(1.0000);">G</div>
<div class="t" style="left:429.50px;top:196.00px;font-size:11.9px;color:#f0f0f0;font-weight:normal;transform:scaleX(1.0000);">H</div>
<div class="t" style="left:486.75px;top:196.00px;font-size:11.9px;color:#f0f0f0;font-weight:normal;transform:scaleX(1.0000);">I</div>
<div class="t" style="left:540.37px;top:196.00px;font-size:11.9px;color:#f0f0f0;font-weight:normal;transform:scaleX(1.0000);">J</div>
<div class="t" style="left:593.22px;top:196.00px;font-size:11.9px;color:#f0f0f0;font-weight:normal;transform:scaleX(1.0000);">K</div>
<div class="t" style="left:648.61px;top:196.00px;font-size:11.9px;color:#f0f0f0;font-weight:normal;transform:scaleX(1.0000);">L</div>
<div class="t" style="left:702.11px;top:196.00px;font-size:11.9px;color:#f0f0f0;font-weight:normal;transform:scaleX(1.0000);">I</div>
<div class="t" style="left:9.75px;top:212.00px;font-size:12.5px;color:#f0f0f0;font-weight:normal;transform:scaleX(1.0000);">1</div>
<div class="t" style="left:9.93px;top:229.00px;font-size:12.5px;color:#f0f0f0;font-weight:normal;transform:scaleX(1.0000);">2</div>
<div class="t" style="left:9.96px;top:246.00px;font-size:12.5px;color:#f0f0f0;font-weight:normal;transform:scaleX(1.0000);">3</div>
<div class="t" style="left:9.97px;top:263.00px;font-size:12.5px;color:#f0f0f0;font-weight:normal;transform:scaleX(1.0000);">4</div>
<div class="t" style="left:9.94px;top:280.00px;font-size:12.5px;color:#f0f0f0;font-weight:normal;transform:scaleX(1.0000);">5</div>
<div class="t" style="left:9.89px;top:296.00px;font-size:12.5px;color:#f0f0f0;font-weight:normal;transform:scaleX(1.0000);">6</div>
<div class="t" style="left:9.91px;top:313.00px;font-size:12.5px;color:#f0f0f0;font-weight:normal;transform:scaleX(1.0000);">7</div>
<div class="t" style="left:9.92px;top:330.00px;font-size:12.5px;color:#f0f0f0;font-weight:normal;transform:scaleX(1.0000);">8</div>
<div class="t" style="left:9.94px;top:347.00px;font-size:12.5px;color:#f0f0f0;font-weight:normal;transform:scaleX(1.0000);">9</div>
<div class="t" style="left:6.21px;top:364.00px;font-size:12.5px;color:#f0f0f0;font-weight:normal;transform:scaleX(1.0000);">10</div>
<div class="t" style="left:6.74px;top:381.00px;font-size:12.5px;color:#f0f0f0;font-weight:normal;transform:scaleX(1.0000);">11</div>
<div class="t" style="left:6.29px;top:398.00px;font-size:12.5px;color:#f0f0f0;font-weight:normal;transform:scaleX(1.0000);">12</div>
<div class="t" style="left:6.25px;top:414.00px;font-size:12.5px;color:#f0f0f0;font-weight:normal;transform:scaleX(1.0000);">13</div>
<div class="t" style="left:6.16px;top:431.00px;font-size:12.5px;color:#f0f0f0;font-weight:normal;transform:scaleX(1.0000);">14</div>
<div class="t" style="left:6.24px;top:448.00px;font-size:12.5px;color:#f0f0f0;font-weight:normal;transform:scaleX(1.0000);">15</div>
<div class="r" style="left:353.40000000000003px;top:259.52px;width:51.599999999999966px;height:32.48000000000002px;background:#c8c8c8"></div>
<div class="r" style="left:353.40000000000003px;top:275.86px;width:51.599999999999966px;height:1.0px;background:#b4b4b4"></div>
<div class="r" style="left:351.2px;top:242.2px;width:54.2px;height:49.6px;border:1.5px solid #447d5c"></div>
<div class="r" style="left:405px;top:291.3px;width:3px;height:3.0px;background:#2f6f4c"></div>
<div class="t" style="left:354.25px;top:246.00px;font-size:12.2px;color:#262626;font-weight:normal;transform:scaleX(0.9532);-webkit-text-stroke:0.05px currentColor">Welcome</div>
<div class="t" style="left:354.10px;top:263.00px;font-size:12.2px;color:#262626;font-weight:normal;transform:scaleX(1.0035);-webkit-text-stroke:0.05px currentColor">to</div>
<div class="t" style="left:353.80px;top:279.00px;font-size:12.2px;color:#262626;font-weight:normal;transform:scaleX(0.9826);-webkit-text-stroke:0.05px currentColor">delhi</div>
<div class="r" style="left:409.5px;top:295.5px;width:14.5px;height:13px;border:1px solid #d0d0d0;background:#fff"></div>
<svg class="s" style="left:411px;top:297px" width="13" height="12" viewBox="0 0 13 12"><path d="M3.5 3.5 H11.2 V10.5 H1.8 V6" fill="none" stroke="#555" stroke-width="1.3"/><rect x="4" y="6.5" width="5" height="2" fill="#888"/><circle cx="2.5" cy="2.3" r="2" fill="#ee8a3a"/></svg>
<div class="r" style="left:333px;top:232px;width:80px;height:66px;border:3px solid #d0262e"></div>
<div class="r" style="left:704px;top:192px;width:16px;height:262px;background:#151515"></div>
<svg class="s" style="left:708.5px;top:196.5px" width="8" height="6" viewBox="0 0 8 6"><path d="M4 0.5 L7.8 5.5 H0.2 Z" fill="#a8a8a8"/></svg>
<div class="r" style="left:709.3px;top:206.7px;width:6.3px;height:158.3px;border-radius:3.2px;background:#a6a6a6"></div>
<svg class="s" style="left:708.5px;top:447px" width="8" height="5" viewBox="0 0 8 5"><path d="M4 4.8 L7.8 0.2 H0.2 Z" fill="#a0a0a0"/></svg>
<div class="r" style="left:2px;top:466px;width:718px;height:13px;background:#121518"></div>
<div class="r" style="left:2px;top:454px;width:299.5px;height:25px;background:#121518;border-top-right-radius:5px"></div>
<div class="r" style="left:353.6px;top:454px;width:366.4px;height:25px;background:#121518;border-top-left-radius:5px"></div>
<svg class="s" style="left:19px;top:461px" width="7" height="10" viewBox="0 0 7 10"><path d="M5.5 1 L1.5 5 L5.5 9" fill="none" stroke="#b0b0b0" stroke-width="1.1"/></svg>
<svg class="s" style="left:45px;top:461px" width="7" height="10" viewBox="0 0 7 10"><path d="M1.5 1 L5.5 5 L1.5 9" fill="none" stroke="#b0b0b0" stroke-width="1.1"/></svg>
<div class="t" style="left:95.01px;top:462.00px;font-size:12.7px;color:#e8e8e8;font-weight:normal;transform:scaleX(0.8319);">Sheet1</div>
<div class="t" style="left:147.50px;top:462.00px;font-size:12.7px;color:#e8e8e8;font-weight:normal;transform:scaleX(0.8517);">Sheet2</div>
<div class="t" style="left:201.26px;top:462.00px;font-size:12.7px;color:#e8e8e8;font-weight:normal;transform:scaleX(0.8373);">Sheet3</div>
<div class="t" style="left:255.01px;top:462.00px;font-size:12.7px;color:#e8e8e8;font-weight:normal;transform:scaleX(0.8319);">Sheet9</div>
<div class="r" style="left:137.5px;top:459px;width:1.0px;height:15px;background:#3c3c3c"></div>
<div class="r" style="left:190.75px;top:459px;width:1.0px;height:15px;background:#3c3c3c"></div>
<div class="r" style="left:244.5px;top:459px;width:1.0px;height:15px;background:#3c3c3c"></div>
<div class="r" style="left:298.25px;top:459px;width:1.0px;height:15px;background:#3c3c3c"></div>
<div class="r" style="left:356.5px;top:459px;width:1.0px;height:15px;background:#3c3c3c"></div>
<div class="r" style="left:301.5px;top:450px;width:52.1px;height:26.5px;background:#fff;border-radius:0 0 5px 5px"></div>
<div class="t" style="left:308.02px;top:459.00px;font-size:12.7px;color:#333333;font-weight:normal;transform:scaleX(0.8208);">Sheet13</div>
<div class="r" style="left:308px;top:472.3px;width:39px;height:1.8999999999999773px;background:#3a8a5c;border-radius:1px"></div>
<div class="t" style="left:367.11px;top:462.00px;font-size:12.7px;color:#e8e8e8;font-weight:normal;transform:scaleX(0.6698);">S</div>
<div class="r" style="left:380.50px;top:465px;width:2.2px;height:2.2px;border-radius:50%;background:#e0e0e0"></div>
<div class="r" style="left:384.20px;top:465px;width:2.2px;height:2.2px;border-radius:50%;background:#e0e0e0"></div>
<div class="r" style="left:387.90px;top:465px;width:2.2px;height:2.2px;border-radius:50%;background:#e0e0e0"></div>
<div class="r" style="left:406.2px;top:465.5px;width:8.800000000000011px;height:1.1999999999999886px;background:#d8d8d8"></div>
<div class="r" style="left:410px;top:461.6px;width:1.1999999999999886px;height:8.799999999999955px;background:#d8d8d8"></div>
<div class="r" style="left:435px;top:462.70px;width:1.7px;height:1.7px;border-radius:50%;background:#d0d0d0"></div>
<div class="r" style="left:435px;top:465.70px;width:1.7px;height:1.7px;border-radius:50%;background:#d0d0d0"></div>
<div class="r" style="left:435px;top:468.70px;width:1.7px;height:1.7px;border-radius:50%;background:#d0d0d0"></div>
<svg class="s" style="left:452px;top:462px" width="7" height="9" viewBox="0 0 7 9"><path d="M0.3 4.5 L6.5 0.5 V8.5 Z" fill="#a8a8a8"/></svg>
<div class="r" style="left:462px;top:462.5px;width:219px;height:7px;border-radius:3.5px;background:#a6a6a6"></div>
<svg class="s" style="left:695.5px;top:462px" width="7" height="9" viewBox="0 0 7 9"><path d="M6.7 4.5 L0.5 0.5 V8.5 Z" fill="#a0a0a0"/></svg>
<div class="r" style="left:2px;top:479px;width:718px;height:14px;background:#141414"></div>
<div class="t" style="left:10.45px;top:484.00px;font-size:8.9px;color:#cfcfcf;font-weight:normal;transform:scaleX(0.8889);">Ready</div>
<svg class="s" style="left:47px;top:482px" width="14" height="11" viewBox="0 0 14 11"><rect x="0.7" y="0.7" width="12" height="10" fill="none" stroke="#bdbdbd" stroke-width="1.1"/><path d="M0.7 3 H12.7" stroke="#bdbdbd" stroke-width="1"/><circle cx="7.5" cy="7.5" r="3" fill="#1a1a1a" stroke="#bdbdbd" stroke-width="1.3"/></svg>
<svg class="s" style="left:71.5px;top:482px" width="13" height="12" viewBox="0 0 13 12"><circle cx="6.5" cy="2.3" r="1.7" fill="none" stroke="#dadada" stroke-width="1.2"/><path d="M1.2 1.8 L4 5.2 H9 L11.8 1.8 M4.5 5.2 V8 L2 11.5 M8.5 5.2 V8 L11 11.5 M4.5 8 H8.5" fill="none" stroke="#dadada" stroke-width="1.3" stroke-linejoin="round"/></svg>
<div class="t" style="left:86.49px;top:484.00px;font-size:8.9px;color:#f0f0f0;font-weight:bold;transform:scaleX(0.9261);">Accessibility: Investigate</div>
<div class="t" style="left:433.34px;top:484.00px;font-size:8.9px;color:#cfcfcf;font-weight:normal;transform:scaleX(0.9145);">Count: 3</div>
<div class="r" style="left:480px;top:479px;width:29.399999999999977px;height:14px;background:#1f1f1f"></div>
<svg class="s" style="left:487.5px;top:482px" width="12" height="12" viewBox="0 0 12 12"><path d="M1 1 H10.5 V12 H1 Z M4.2 1 V12 M7.4 1 V12 M1 4.5 H10.5 M1 8 H10.5" fill="none" stroke="#e6e6e6" stroke-width="1.3"/></svg>
<svg class="s" style="left:519px;top:482px" width="13" height="12" viewBox="0 0 13 12"><rect x="0.8" y="0.8" width="11" height="11.5" rx="1.5" fill="none" stroke="#bdbdbd" stroke-width="1.2"/><path d="M3.5 3 V12 M9 3 V12 M5.5 4 H7 V10 H5.5 Z" fill="none" stroke="#bdbdbd" stroke-width="0.9"/></svg>
<svg class="s" style="left:551px;top:482px" width="12" height="12" viewBox="0 0 12 12"><path d="M0.8 0.8 H11 V12 H0.8 Z M4.5 0.8 V5.5 M7.2 0.8 V5.5 H0.8" fill="none" stroke="#e0e0e0" stroke-width="1.3"/></svg>
<div class="r" style="left:577.3px;top:487.5px;width:4.900000000000091px;height:1.0px;background:#bdbdbd"></div>
<div class="r" style="left:587px;top:487.5px;width:78px;height:1.0px;background:#bdbdbd"></div>
<div class="r" style="left:624px;top:483px;width:4px;height:10px;background:#bdbdbd"></div>
<div class="r" style="left:669.3px;top:487.5px;width:5.7000000000000455px;height:1.0px;background:#bdbdbd"></div>
<div class="r" style="left:671.7px;top:485px;width:1.0px;height:6px;background:#bdbdbd"></div>
<div class="t" style="left:684.88px;top:484.00px;font-size:8.9px;color:#cfcfcf;font-weight:normal;transform:scaleX(0.9187);">100%</div>
</body></html>
